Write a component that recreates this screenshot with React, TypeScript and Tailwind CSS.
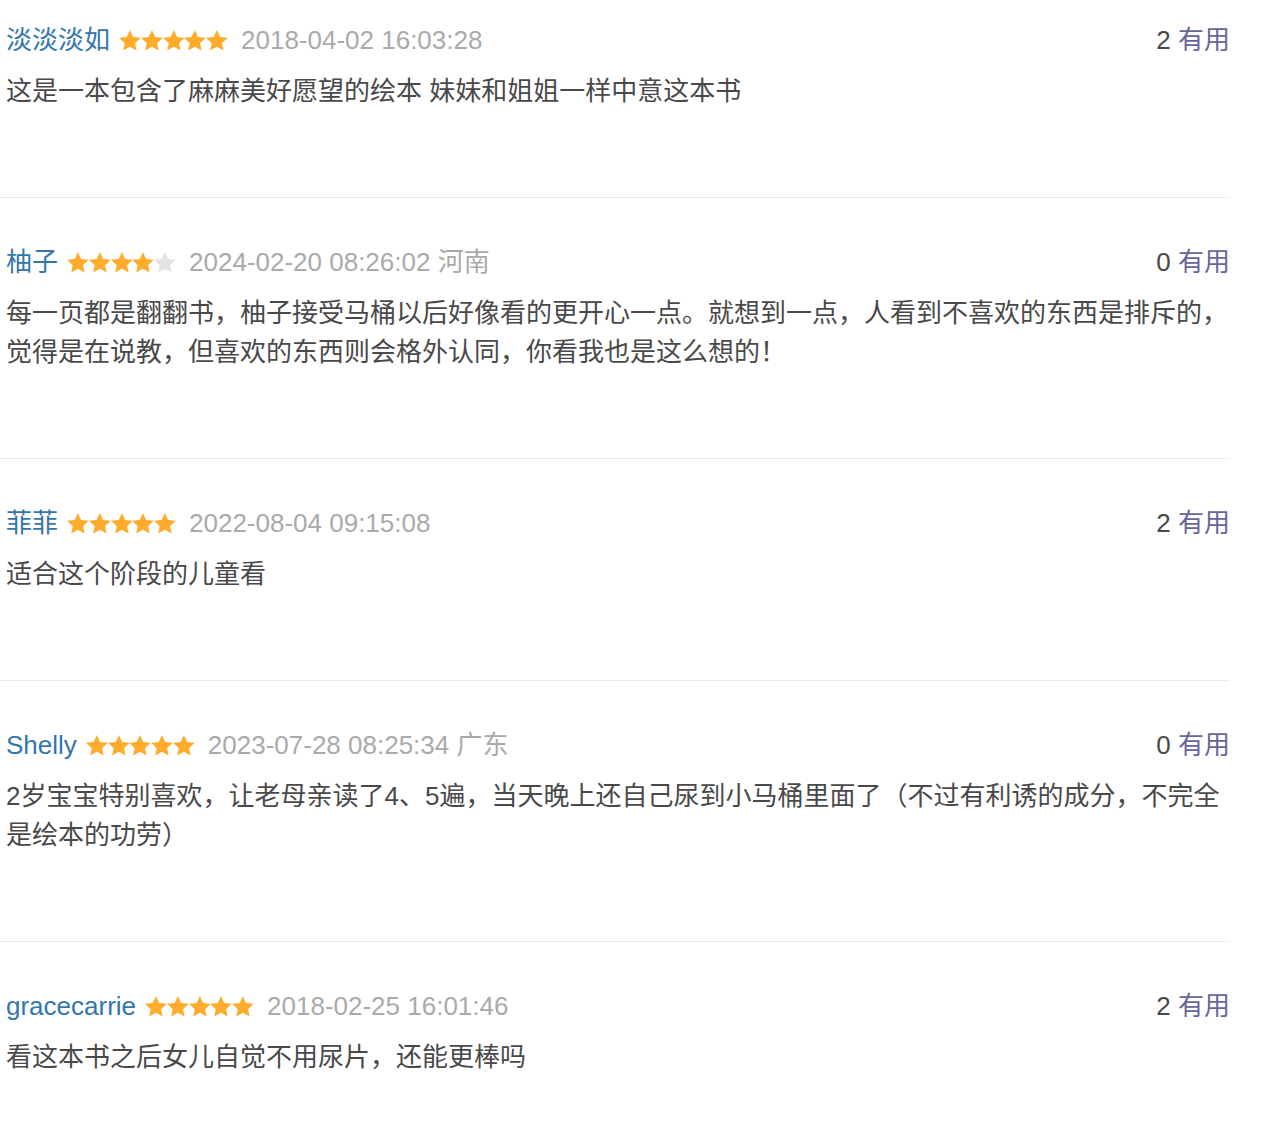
import React from "react";

type Comment = {
    name: string;
    stars: number;
    time: string;
    location?: string;
    votes: number;
    content: string;
};

const COMMENTS: Comment[] = [
    {
        name: "淡淡淡如",
        stars: 5,
        time: "2018-04-02 16:03:28",
        votes: 2,
        content: "这是一本包含了麻麻美好愿望的绘本 妹妹和姐姐一样中意这本书",
    },
    {
        name: "柚子",
        stars: 4,
        time: "2024-02-20 08:26:02",
        location: "河南",
        votes: 0,
        content:
            "每一页都是翻翻书，柚子接受马桶以后好像看的更开心一点。就想到一点，人看到不喜欢的东西是排斥的，觉得是在说教，但喜欢的东西则会格外认同，你看我也是这么想的！",
    },
    {
        name: "菲菲",
        stars: 5,
        time: "2022-08-04 09:15:08",
        votes: 2,
        content: "适合这个阶段的儿童看",
    },
    {
        name: "Shelly",
        stars: 5,
        time: "2023-07-28 08:25:34",
        location: "广东",
        votes: 0,
        content: "2岁宝宝特别喜欢，让老母亲读了4、5遍，当天晚上还自己尿到小马桶里面了（不过有利诱的成分，不完全是绘本的功劳）",
    },
    {
        name: "gracecarrie",
        stars: 5,
        time: "2018-02-25 16:01:46",
        votes: 2,
        content: "看这本书之后女儿自觉不用尿片，还能更棒吗",
    },
];

// fat five-point star, roughly the douban sprite shape
function Star({ filled }: { filled: boolean }) {
    return (
        <svg viewBox="0 0 24 23" className="h-[21px] w-[21.8px]" aria-hidden="true">
            <path
                d="M12 0 L15.5 7.6 L23.9 8.6 L17.7 14.4 L19.4 22.6 L12 18.5 L4.6 22.6 L6.3 14.4 L0.1 8.6 L8.5 7.6 Z"
                fill={filled ? "#ffac2d" : "#e3e3e3"}
            />
        </svg>
    );
}

function Rating({ value }: { value: number }) {
    return (
        <span className="ml-[9px] flex items-center">
            {[0, 1, 2, 3, 4].map((i) => (
                <Star key={i} filled={i < value} />
            ))}
        </span>
    );
}

export default function App() {
    return (
        <div
            className="w-[1230px] bg-white text-[26px] leading-[39px]"
            style={{ fontFamily: '"Liberation Sans", Arial, "Noto Sans CJK SC", sans-serif' }}
        >
            {COMMENTS.map((c, idx) => (
                <div
                    key={c.name}
                    className={`border-b border-[#eaeaea] pb-[86px] pl-[6px] ${idx === 0 ? "pt-[21px]" : "pt-[45px]"}`}
                >
                    <div className="flex items-center justify-between">
                        <div className="flex items-center">
                            <span className="text-[#3377aa]">{c.name}</span>
                            <Rating value={c.stars} />
                            <span className="ml-[13px] text-[#aaaaaa]">
                                {c.time}
                                {c.location ? ` ${c.location}` : ""}
                            </span>
                        </div>
                        <div>
                            <span className="text-[#494949]">{c.votes}</span>{" "}
                            <span className="text-[#666699]">有用</span>
                        </div>
                    </div>
                    <p className="mt-[12px] text-[#494949]">{c.content}</p>
                </div>
            ))}
        </div>
    );
}
